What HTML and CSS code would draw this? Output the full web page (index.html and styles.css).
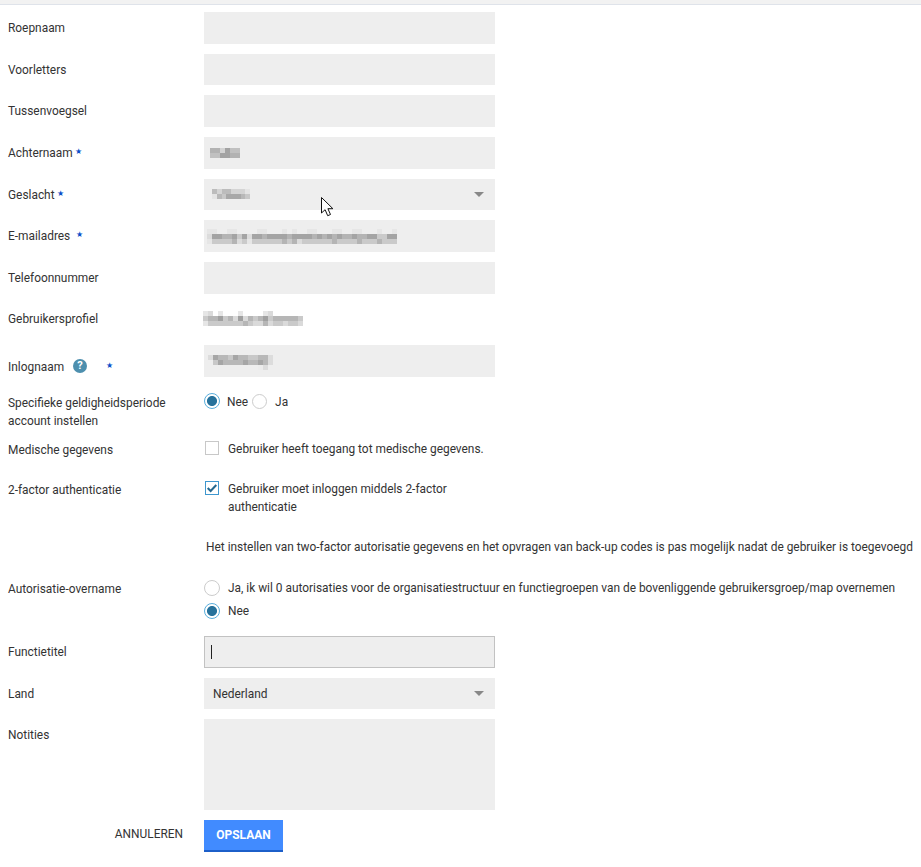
FILE: index.html
```html
<!DOCTYPE html>
<html lang="nl">
<head>
    <meta charset="UTF-8">
    <title>Gebruiker toevoegen</title>
    <link rel="stylesheet" href="styles.css">
</head>
<body>
    <div class="topbar"></div>

    <form class="user-form">
        <div class="row"><label class="label">Roepnaam</label><div class="input"></div></div>
        <div class="row"><label class="label">Voorletters</label><div class="input"></div></div>
        <div class="row"><label class="label">Tussenvoegsel</label><div class="input"></div></div>

        <div class="row">
            <label class="label">Achternaam <span class="req req-achternaam">★</span></label>
            <div class="input">
                <svg class="mosaic m-achternaam" viewBox="0 0 6 2" width="30" height="10">
                    <path stroke="#b2b2b2" d="M0 .5h2M3 .5h1M4 1.5h2"/>
                    <path stroke="#a2a2a2" d="M2 1.5h2M3 .5h1"/>
                    <path stroke="#c0c0c0" d="M0 1.5h2M4 .5h2"/>
                    <path stroke="#d2d2d2" d="M2 .5h1"/>
                </svg>
            </div>
        </div>

        <div class="row">
            <label class="label">Geslacht <span class="req req-geslacht">★</span></label>
            <div class="input select">
                <svg class="mosaic m-geslacht" viewBox="0 0 8 2" width="38" height="10">
                    <path stroke="#bcbcbc" d="M0 .5h1M2 .5h2"/>
                    <path stroke="#d4d4d4" d="M1 .5h1M4 .5h3"/>
                    <path stroke="#e4e4e4" d="M7 .5h1M0 1.5h1"/>
                    <path stroke="#b8b8b8" d="M1 1.5h1M6 1.5h1"/>
                    <path stroke="#a8a8a8" d="M3 1.5h3"/>
                    <path stroke="#c8c8c8" d="M2 1.5h1M7 1.5h1"/>
                </svg>
                <span class="caret"></span>
            </div>
            <svg class="cursor" viewBox="0 0 13 20" width="13" height="20">
                <path d="M.5.5v15.5l3.6-3.3 2.6 6 2.8-1.2-2.6-5.8h5z" fill="#fff" stroke="#111"/>
            </svg>
        </div>

        <div class="row">
            <label class="label">E-mailadres <span class="req req-email">★</span></label>
            <div class="input">
                <svg class="mosaic m-email" viewBox="0 0 38 3" width="190" height="15">
                    <path stroke="#e6e6e6" d="M0 .5h2M4 .5h2M10 .5h2M15 .5h1M17 .5h1M20 .5h2M25 .5h2M29 .5h2M34 .5h1M37 .5h1M0 2.5h1M8 2.5h1"/>
                    <path stroke="#a4a4a4" d="M1 1.5h2M5 1.5h1M7 1.5h1M9 1.5h2M12 1.5h4M17 1.5h4M22 1.5h1M24 1.5h1M26 1.5h1M29 1.5h1M32 1.5h2M36 1.5h2"/>
                    <path stroke="#b4b4b4" d="M3 1.5h2M11 1.5h1M16 1.5h1M21 1.5h1M23 1.5h1M25 1.5h1M27 1.5h2M30 1.5h2M5 2.5h1M15 2.5h1M17 2.5h1M25 2.5h1M30 2.5h1M34 2.5h1"/>
                    <path stroke="#cacaca" d="M6 1.5h1M34 1.5h2M1 2.5h4M7 2.5h1M9 2.5h6M16 2.5h1M19 2.5h6M26 2.5h4M31 2.5h3M35 2.5h3"/>
                    <path stroke="#dcdcdc" d="M0 1.5h1M8 1.5h1M6 2.5h1M18 2.5h1"/>
                </svg>
            </div>
        </div>

        <div class="row"><label class="label">Telefoonnummer</label><div class="input"></div></div>

        <div class="row">
            <label class="label label-profile">Gebruikersprofiel</label>
            <div class="plain">
                <svg class="mosaic m-profiel" viewBox="0 0 20 3" width="100" height="15">
                    <path stroke="#e6e6e6" d="M0 .5h1M3 .5h1M7 .5h1M12 .5h1M0 2.5h1"/>
                    <path stroke="#dadada" d="M1 .5h1M13 .5h1M6 1.5h1M8 1.5h1M10 2.5h2M13 2.5h1M16 2.5h1M19 2.5h1"/>
                    <path stroke="#a0a0a0" d="M3 1.5h1M7 1.5h1M12 1.5h1"/>
                    <path stroke="#b6b6b6" d="M1 1.5h2M5 1.5h1M9 1.5h1M11 1.5h1M14 1.5h5M8 2.5h1M12 2.5h1"/>
                    <path stroke="#cacaca" d="M0 1.5h1M4 1.5h1M10 1.5h1M13 1.5h1M19 1.5h1M1 2.5h7M9 2.5h1M14 2.5h2M17 2.5h2"/>
                </svg>
            </div>
        </div>

        <div class="row">
            <label class="label label-low">Inlognaam
                <span class="help">?</span>
                <span class="req req-inlog">★</span>
            </label>
            <div class="input">
                <svg class="mosaic m-inlog" viewBox="0 0 13 3" width="65" height="15">
                    <path stroke="#a6a6a6" d="M1 .5h1M5 .5h1M2 1.5h1M7 1.5h1M10 1.5h1"/>
                    <path stroke="#b8b8b8" d="M2 .5h2M6 .5h2M10 .5h2M3 1.5h4M8 1.5h2M11 1.5h1"/>
                    <path stroke="#c8c8c8" d="M4 .5h1M8 .5h2M1 1.5h1"/>
                    <path stroke="#dcdcdc" d="M0 .5h1M12 .5h1M12 1.5h1M11 2.5h1"/>
                    <path stroke="#ececec" d="M10 2.5h1"/>
                </svg>
            </div>
        </div>

        <div class="row row-period">
            <label class="label label-text">Specifieke geldigheidsperiode account instellen</label>
            <div class="choices-inline">
                <span class="radio checked"></span><span class="choice-text">Nee</span>
                <span class="radio radio-small"></span><span class="choice-text choice-ja">Ja</span>
            </div>
        </div>

        <div class="row row-medical">
            <label class="label label-text">Medische gegevens</label>
            <div class="check-line">
                <span class="checkbox"></span>
                <span class="check-text">Gebruiker heeft toegang tot medische gegevens.</span>
            </div>
        </div>

        <div class="row row-twofactor">
            <label class="label label-text">2-factor authenticatie</label>
            <div class="check-line">
                <span class="checkbox checked">
                    <svg viewBox="0 0 14 14" width="12" height="12"><path d="M2 7l3.4 3.4L12 3.6" fill="none" stroke="#25688f" stroke-width="2.4"/></svg>
                </span>
                <span class="check-text">Gebruiker moet inloggen middels 2-factor authenticatie</span>
            </div>
        </div>

        <p class="notice">Het instellen van two-factor autorisatie gegevens en het opvragen van back-up codes is pas mogelijk nadat de gebruiker is toegevoegd</p>

        <div class="row row-takeover">
            <label class="label label-text label-takeover">Autorisatie-overname</label>
            <div class="choices">
                <div class="choice"><span class="radio"></span><span>Ja, ik wil 0 autorisaties voor de organisatiestructuur en functiegroepen van de bovenliggende gebruikersgroep/map overnemen</span></div>
                <div class="choice"><span class="radio checked"></span><span>Nee</span></div>
            </div>
        </div>

        <div class="row">
            <label class="label">Functietitel</label>
            <div class="input focused"><span class="text-caret"></span></div>
        </div>

        <div class="row">
            <label class="label">Land</label>
            <div class="input select"><span class="value">Nederland</span><span class="caret"></span></div>
        </div>

        <div class="row row-notes">
            <label class="label">Notities</label>
            <div class="input textarea"></div>
        </div>

        <div class="actions">
            <a class="cancel">ANNULEREN</a>
            <button class="save" type="button">OPSLAAN</button>
        </div>
    </form>
</body>
</html>
```

FILE: styles.css
```css
* {
    margin: 0;
    padding: 0;
    box-sizing: border-box;
}

body {
    background: #fff;
    color: #333;
    font-family: Roboto, "Liberation Sans", sans-serif;
    font-size: 11.9px;
    line-height: 18px;
    overflow: hidden;
}

.topbar {
    height: 5px;
    background: #f2f2f2;
    border-bottom: 1px solid #dfe3ea;
}

.user-form {
    padding: 7px 0 0 8px;
}

.row {
    position: relative;
    display: grid;
    grid-template-columns: 196px 291px;
    height: 41.67px;
}

.label {
    padding-top: 7px;
    white-space: nowrap;
}

.label-profile {
    padding-top: 6px;
}

.label-low {
    padding-top: 13px;
}

.label-text {
    padding-top: 1px;
    white-space: normal;
    width: 180px;
}

.label-takeover {
    padding-top: 2px;
}

.input {
    position: relative;
    display: flex;
    align-items: center;
    height: 31.67px;
    padding-left: 9px;
    background: #eee;
}

.value {
    padding-top: 2px;
}

.plain {
    display: flex;
    align-items: center;
    height: 30px;
}

.mosaic {
    display: block;
    flex: none;
    shape-rendering: crispEdges;
    fill: none;
    stroke-width: 1;
}

.m-achternaam { margin-left: -3px; }
.m-geslacht { margin-left: -1px; }
.m-email { margin-left: -6px; }
.m-profiel { margin-left: -1px; }
.m-inlog { margin: 3px 0 0 -5px; }

.req {
    position: absolute;
    color: #0b4fc9;
    font-size: 8px;
    line-height: 10px;
    font-family: "DejaVu Sans", sans-serif;
}

.req-achternaam { left: 67px; top: 10px; }
.req-geslacht { left: 49px; top: 10px; }
.req-email { left: 68px; top: 10px; }
.req-inlog { left: 98px; top: 16px; }

.help {
    position: absolute;
    left: 65px;
    top: 14px;
    width: 14px;
    height: 14px;
    border-radius: 50%;
    background: #4d8fae;
    color: #fff;
    font-size: 11px;
    font-weight: 700;
    line-height: 14px;
    text-align: center;
}

.select .caret {
    position: absolute;
    right: 11px;
    top: 13px;
    border-left: 5px solid transparent;
    border-right: 5px solid transparent;
    border-top: 5px solid #888;
}

.cursor {
    position: absolute;
    left: 313px;
    top: 18px;
}

.focused {
    border: 1px solid #c2c2c2;
    padding-left: 6px;
}

.text-caret {
    width: 1px;
    height: 14px;
    background: #222;
}

.textarea {
    height: 91px;
}

.radio {
    display: inline-block;
    flex: none;
    width: 16px;
    height: 16px;
    border: 1px solid #ccc;
    border-radius: 50%;
    background: #fff;
}

.radio.checked {
    border-color: #5aaedc;
    background: radial-gradient(circle, #26719b 0, #26719b 4.6px, #fff 5.4px);
}

.radio-small {
    width: 15px;
    height: 15px;
    margin-left: 4px;
}

.row-period {
    height: 47px;
    margin-top: 6px;
}

.choices-inline {
    display: flex;
    align-items: center;
    height: 17px;
}

.choice-text {
    margin-left: 7px;
    padding-top: 1px;
}

.choice-ja {
    margin-left: 8px;
}

.row-medical {
    height: 40px;
}

.row-twofactor {
    height: 58px;
}

.check-line {
    position: relative;
    display: flex;
    align-items: flex-start;
    padding-left: 1px;
}

.checkbox {
    display: flex;
    align-items: center;
    justify-content: center;
    flex: none;
    width: 14px;
    height: 14px;
    margin-top: 1px;
    border: 1px solid #c8c8c8;
    background: #fff;
}

.checkbox.checked {
    border-color: #3e97cf;
}

.check-text {
    margin-left: 9px;
    width: 262px;
}

.notice {
    margin-left: 198px;
    white-space: nowrap;
    height: 40px;
}

.row-takeover {
    height: 59px;
    margin-bottom: -1px;
}

.choices {
    margin-top: -1px;
}

.choice {
    display: flex;
    align-items: center;
    gap: 8px;
    height: 23px;
    white-space: nowrap;
}

.row-notes {
    height: 101px;
}

.actions {
    display: grid;
    grid-template-columns: 196px 79px;
}

.cancel {
    padding: 5px 21px 0 0;
    text-align: right;
    color: #333;
}

.save {
    height: 32px;
    border: none;
    border-bottom: 2px solid #1c5fc9;
    background: #418bff;
    color: #fff;
    font-family: inherit;
    font-size: 12px;
    font-weight: 700;
}
```
